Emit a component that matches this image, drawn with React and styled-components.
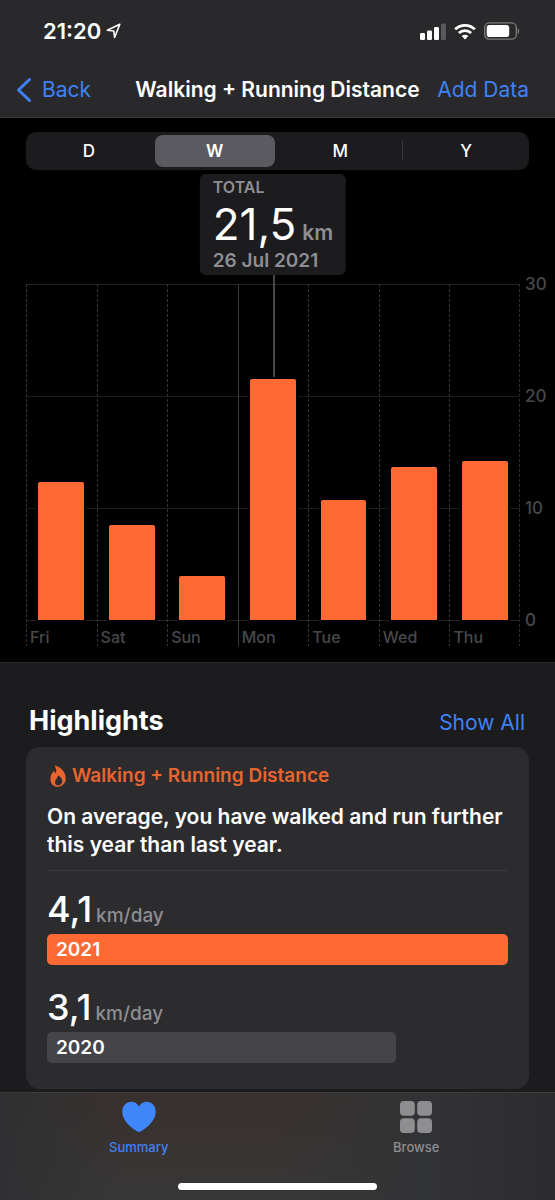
import { useState } from 'react';
import styled, { createGlobalStyle, css } from 'styled-components';

const GlobalStyle = createGlobalStyle`
    * {
        box-sizing: border-box;
    }

    body {
        margin: 0;
        background: #1c1c1e;
        color: #fff;
        font-family: Inter, "Liberation Sans", sans-serif;
    }

    button {
        padding: 0;
        border: 0;
        background: none;
        color: inherit;
        font: inherit;
        cursor: pointer;
    }

    h1, h2, h3, p {
        margin: 0;
    }
`;

const Screen = styled.div`
    display: flex;
    flex-direction: column;
    min-height: 100vh;
`;

const Header = styled.header`
    background: #29292b;
    border-bottom: 1px solid #38383a;
`;

const StatusBar = styled.div`
    display: flex;
    align-items: center;
    justify-content: space-between;
    height: 62px;
    padding: 0 35px 0 43px;
`;

const StatusGroup = styled.div`
    display: flex;
    align-items: center;
    gap: ${({ $gap }) => $gap}px;
`;

const Clock = styled.span`
    font-size: 22px;
    font-weight: 600;
`;

const NavBar = styled.nav`
    display: grid;
    grid-template-columns: 1fr auto 1fr;
    align-items: center;
    height: 55px;
    padding: 0 16px;
`;

const NavTitle = styled.h1`
    font-size: 21px;
    font-weight: 600;
    white-space: nowrap;
`;

const LinkButton = styled.button`
    display: flex;
    align-items: center;
    justify-self: ${({ $end }) => ($end ? 'end' : 'start')};
    gap: 10px;
    padding-right: ${({ $end }) => ($end ? 10 : 0)}px;
    color: #3f82f6;
    font-size: 21px;
    white-space: nowrap;
`;

const ChartSection = styled.section`
    padding: 14px 0 15px;
    background: #000;
    border-bottom: 1px solid #2c2c2e;
`;

const Segments = styled.div`
    display: grid;
    grid-template-columns: repeat(4, 1fr);
    margin: 0 26px;
    padding: 3px 0;
    border-radius: 10px;
    background: #1c1c1f;
`;

const Segment = styled.button`
    position: relative;
    height: 32px;
    margin: 0 3px;
    border-radius: 8px;
    font-size: 17px;
    font-weight: 500;

    ${({ $active }) => $active && css`
        background: #5b5a60;
        font-weight: 600;
    `}

    ${({ $divided }) => $divided && css`
        &::after {
            content: '';
            position: absolute;
            top: 6px;
            right: -3px;
            width: 1px;
            height: 20px;
            background: #3a3a3d;
        }
    `}
`;

const Chart = styled.div`
    display: flex;
    gap: 5px;
    margin: 114px 0 0 26px;
`;

const Plot = styled.div`
    display: grid;
    grid-template-columns: repeat(7, 1fr);
    flex: 1;
    background:
        linear-gradient(#232325, #232325) 0 0 / 100% 1px no-repeat,
        linear-gradient(#1b1b1d, #1b1b1d) 0 112px / 100% 1px no-repeat,
        linear-gradient(#1b1b1d, #1b1b1d) 0 224px / 100% 1px no-repeat,
        linear-gradient(#232325, #232325) 0 336px / 100% 1px no-repeat,
        repeating-linear-gradient(#2e2e30 0 3px, transparent 3px 5px) 100% 0 / 1px 362px no-repeat;
`;

const Column = styled.div`
    position: relative;
    background: ${({ $weekStart }) => ($weekStart
        ? 'linear-gradient(#38383a, #38383a)'
        : 'repeating-linear-gradient(#343436 0 3px, transparent 3px 5px)')} 0 0 / 1px 362px no-repeat;
`;

const BarArea = styled.div`
    display: flex;
    align-items: flex-end;
    justify-content: center;
    height: 336px;
`;

const Bar = styled.div`
    width: 65%;
    border-radius: 2px 2px 0 0;
    background: #ff6934;
    box-shadow: 0 0 0 2px #000;
`;

const DayLabel = styled.div`
    height: 27px;
    padding: 6px 0 0 4px;
    color: #48484b;
    font-size: 16px;
    font-weight: 500;
    line-height: 22px;
`;

const Axis = styled.div`
    display: flex;
    flex-direction: column;
    justify-content: space-between;
    width: 30px;
    height: 356px;
    margin-top: -10px;
    color: #48484b;
    font-size: 17px;
    font-weight: 500;
    line-height: 20px;
`;

const Stem = styled.div`
    position: absolute;
    top: -9px;
    left: 50%;
    width: 2px;
    height: 102px;
    background: #48484a;
`;

const Callout = styled.div`
    position: absolute;
    top: -110px;
    left: 50%;
    height: 101px;
    padding: 2px 13px 0;
    border-radius: 6px;
    background: #1c1c1e;
    color: #8e8e93;
    font-size: 19px;
    font-weight: 600;
    line-height: 22px;
    white-space: nowrap;
    transform: translateX(-50%);
`;

const CalloutTitle = styled.div`
    font-size: 16px;
`;

const CalloutValue = styled.div`
    display: flex;
    align-items: baseline;
    gap: 6px;
    height: 52px;
    font-size: 21px;

    strong {
        color: #fff;
        font-size: 44px;
        font-weight: 400;
        line-height: 52px;
    }
`;

const Highlights = styled.section`
    flex: 1;
    padding: 42px 26px 3px;
`;

const SectionHeader = styled.div`
    display: flex;
    align-items: baseline;
    justify-content: space-between;
    height: 42px;
    padding-left: 3px;

    ${LinkButton} {
        padding-right: 4px;
    }
`;

const SectionTitle = styled.h2`
    font-size: 27px;
    font-weight: 700;
    line-height: 32px;
`;

const Card = styled.article`
    padding: 17px 21px 26px;
    border-radius: 14px;
    background: #2c2c2e;
`;

const CardTitle = styled.h3`
    display: flex;
    align-items: center;
    gap: 6px;
    padding-left: 3px;
    color: #e9642f;
    font-size: 19px;
    font-weight: 600;
    line-height: 24px;
`;

const Summary = styled.p`
    padding: 15px 0 11px;
    border-bottom: 1px solid #3a3a3c;
    font-size: 21px;
    font-weight: 600;
    line-height: 28px;
`;

const Averages = styled.div`
    display: grid;
    gap: 20px;
    padding-top: 16px;
`;

const Average = styled.div`
    display: flex;
    align-items: baseline;
    gap: 4px;
    height: 47px;
    color: #8e8e93;
    font-size: 19px;
    font-weight: 500;

    strong {
        color: #fff;
        font-size: 36px;
        font-weight: 500;
        line-height: 44px;
    }
`;

const YearBar = styled.div`
    padding-left: 9px;
    border-radius: 5px;
    background: ${({ $current }) => ($current ? '#ff6934' : '#454449')};
    color: #fff;
    font-size: 19px;
    font-weight: 600;
    line-height: 31px;
`;

const TabBar = styled.footer`
    position: sticky;
    bottom: 0;
    height: 108px;
    border-top: 1px solid #3d3c3d;
    background:
        linear-gradient(90deg, #2f3032, transparent 22%, transparent 50%, #323335 76%, #2c2c2e),
        linear-gradient(#38302e, #383737);
`;

const Tabs = styled.div`
    display: grid;
    grid-template-columns: 1fr 1fr;
    height: 90px;
`;

const Tab = styled.button`
    display: flex;
    flex-direction: column;
    align-items: center;
    gap: 5px;
    padding-top: 8px;
    color: ${({ $active }) => ($active ? '#3f82f6' : '#8e8e91')};
    font-size: 13px;
    font-weight: 500;
    line-height: 18px;
`;

const HomeIndicator = styled.div`
    width: 36%;
    height: 7px;
    margin: 0 auto;
    border-radius: 4px;
    background: #fff;
`;

const days = [
    { name: 'Fri', km: 12.3 },
    { name: 'Sat', km: 8.5 },
    { name: 'Sun', km: 3.9 },
    { name: 'Mon', km: 21.5, date: '26 Jul 2021' },
    { name: 'Tue', km: 10.7 },
    { name: 'Wed', km: 13.7 },
    { name: 'Thu', km: 14.2 },
];

const averages = [
    { year: 2021, km: 4.1 },
    { year: 2020, km: 3.1 },
];

const MAX_KM = 30;

const formatKm = (km) => String(km).replace('.', ',');

function LocationIcon() {
    return (
        <svg width="15" height="16" viewBox="0 0 15 16" fill="none" stroke="#fff" strokeWidth="1.6" strokeLinejoin="round">
            <path d="M13.8 1.2 1.3 7.2l6.5.8.8 6.5z" />
        </svg>
    );
}

function SignalIcon() {
    return (
        <svg width="26" height="17" viewBox="0 0 26 17" fill="#fff">
            <rect x="0" y="10" width="5" height="7" rx="1.2" />
            <rect x="7" y="7.5" width="5" height="9.5" rx="1.2" />
            <rect x="14" y="4" width="5" height="13" rx="1.2" />
            <rect x="21" y="0.5" width="5" height="16.5" rx="1.2" fill="#59595b" />
        </svg>
    );
}

function WifiIcon() {
    return (
        <svg width="22" height="17" viewBox="0 0 22 17" fill="none" stroke="#fff" strokeWidth="2.8">
            <path d="M1.2 6.3a14 14 0 0 1 19.6 0" />
            <path d="M4.9 10.1a8.7 8.7 0 0 1 12.2 0" />
            <path d="M11 16.4 7.7 13a4.7 4.7 0 0 1 6.6 0z" fill="#fff" stroke="none" />
        </svg>
    );
}

function BatteryIcon() {
    return (
        <svg width="36" height="18" viewBox="0 0 36 18">
            <rect x="0.7" y="0.9" width="31.6" height="16.2" rx="4.6" fill="none" stroke="#7c7c7e" strokeWidth="1.3" />
            <rect x="2.7" y="2.9" width="22.5" height="12.2" rx="2.8" fill="#fff" />
            <path d="M33.7 6.2c2 .8 2 4.8 0 5.6z" fill="#7c7c7e" />
        </svg>
    );
}

function BackIcon() {
    return (
        <svg width="16" height="26" viewBox="0 0 16 26" fill="none" stroke="#3f82f6" strokeWidth="3" strokeLinecap="round" strokeLinejoin="round">
            <path d="M13.5 2.5 2.5 13l11 10.5" />
        </svg>
    );
}

function FlameIcon() {
    return (
        <svg width="16" height="22" viewBox="0 0 16 22" fill="#e9642f">
            <path
                fillRule="evenodd"
                d="M5.200.500C10 1.800 15.700 6.500 15.700 13.300c0 5.100-3.200 8.400-7.800 8.400S.4 18.500.4 13.900c0-3.100 1.400-5.700 3-7.300.5-.5 1-.4 1.200.1.300.8.600 1.300 1.100 1.600C6.800 6.100 6.200 3.600 4.900 1.300 4.600.8 4.800.4 5.200.500zM7.600 10.400c.2 1.500-.3 2.300-1.300 3.500-2.300 2.800-1.500 6.300 1.700 6.300 2.600 0 4.200-1.700 4.200-4.300 0-2.500-1.700-4.700-4.600-5.500z"
            />
        </svg>
    );
}

function HeartIcon() {
    return (
        <svg width="34" height="32" viewBox="0 0 34 32" fill="#3f87fb">
            <path d="M17 31c-.7 0-1.300-.4-2-.8C6.300 24.700.3 18.300.3 10.700.3 4.900 4.300.8 9.400.8c3.200 0 5.900 1.700 7.600 4.600C18.700 2.500 21.400.8 24.600.8c5.100 0 9.100 4.100 9.100 9.900 0 7.600-6 14-14.700 19.500-.7.4-1.300.8-2 .8z" />
        </svg>
    );
}

function BrowseIcon() {
    return (
        <svg width="32" height="32" viewBox="0 0 32 32" fill="#8e8e90">
            <rect x="0" y="0" width="14.800" height="14.800" rx="3.800" />
            <rect x="17.200" y="0" width="14.800" height="14.800" rx="3.800" />
            <rect x="0" y="17.200" width="14.800" height="14.800" rx="3.800" />
            <rect x="17.200" y="17.200" width="14.800" height="14.800" rx="3.800" />
        </svg>
    );
}

function App() {
    const [range, setRange] = useState('W');
    const [tab, setTab] = useState('Summary');

    return (
        <Screen>
            <GlobalStyle />
            <Header>
                <StatusBar>
                    <StatusGroup $gap={5}>
                        <Clock>21:20</Clock>
                        <LocationIcon />
                    </StatusGroup>
                    <StatusGroup $gap={8}>
                        <SignalIcon />
                        <WifiIcon />
                        <BatteryIcon />
                    </StatusGroup>
                </StatusBar>
                <NavBar>
                    <LinkButton><BackIcon />Back</LinkButton>
                    <NavTitle>Walking + Running Distance</NavTitle>
                    <LinkButton $end>Add Data</LinkButton>
                </NavBar>
            </Header>

            <ChartSection>
                <Segments>
                    {['D', 'W', 'M', 'Y'].map((item) => (
                        <Segment
                            key={item}
                            $active={item === range}
                            $divided={item === 'M'}
                            aria-pressed={item === range}
                            onClick={() => setRange(item)}
                        >
                            {item}
                        </Segment>
                    ))}
                </Segments>
                <Chart>
                    <Plot>
                        {days.map((day) => (
                            <Column key={day.name} $weekStart={day.name === 'Mon'}>
                                {day.date && <Stem />}
                                <BarArea>
                                    <Bar style={{ height: `${(day.km / MAX_KM) * 100}%` }} />
                                </BarArea>
                                <DayLabel>{day.name}</DayLabel>
                                {day.date && (
                                    <Callout>
                                        <CalloutTitle>TOTAL</CalloutTitle>
                                        <CalloutValue><strong>{formatKm(day.km)}</strong>km</CalloutValue>
                                        <div>{day.date}</div>
                                    </Callout>
                                )}
                            </Column>
                        ))}
                    </Plot>
                    <Axis>
                        <span>30</span>
                        <span>20</span>
                        <span>10</span>
                        <span>0</span>
                    </Axis>
                </Chart>
            </ChartSection>

            <Highlights>
                <SectionHeader>
                    <SectionTitle>Highlights</SectionTitle>
                    <LinkButton>Show All</LinkButton>
                </SectionHeader>
                <Card>
                    <CardTitle><FlameIcon />Walking + Running Distance</CardTitle>
                    <Summary>On average, you have walked and run further this year than last year.</Summary>
                    <Averages>
                        {averages.map(({ year, km }) => (
                            <div key={year}>
                                <Average><strong>{formatKm(km)}</strong>km/day</Average>
                                <YearBar $current={year === 2021} style={{ width: `${(km / averages[0].km) * 100}%` }}>
                                    {year}
                                </YearBar>
                            </div>
                        ))}
                    </Averages>
                </Card>
            </Highlights>

            <TabBar>
                <Tabs>
                    <Tab $active={tab === 'Summary'} onClick={() => setTab('Summary')}>
                        <HeartIcon />
                        Summary
                    </Tab>
                    <Tab $active={tab === 'Browse'} onClick={() => setTab('Browse')}>
                        <BrowseIcon />
                        Browse
                    </Tab>
                </Tabs>
                <HomeIndicator />
            </TabBar>
        </Screen>
    );
}

export default App;
